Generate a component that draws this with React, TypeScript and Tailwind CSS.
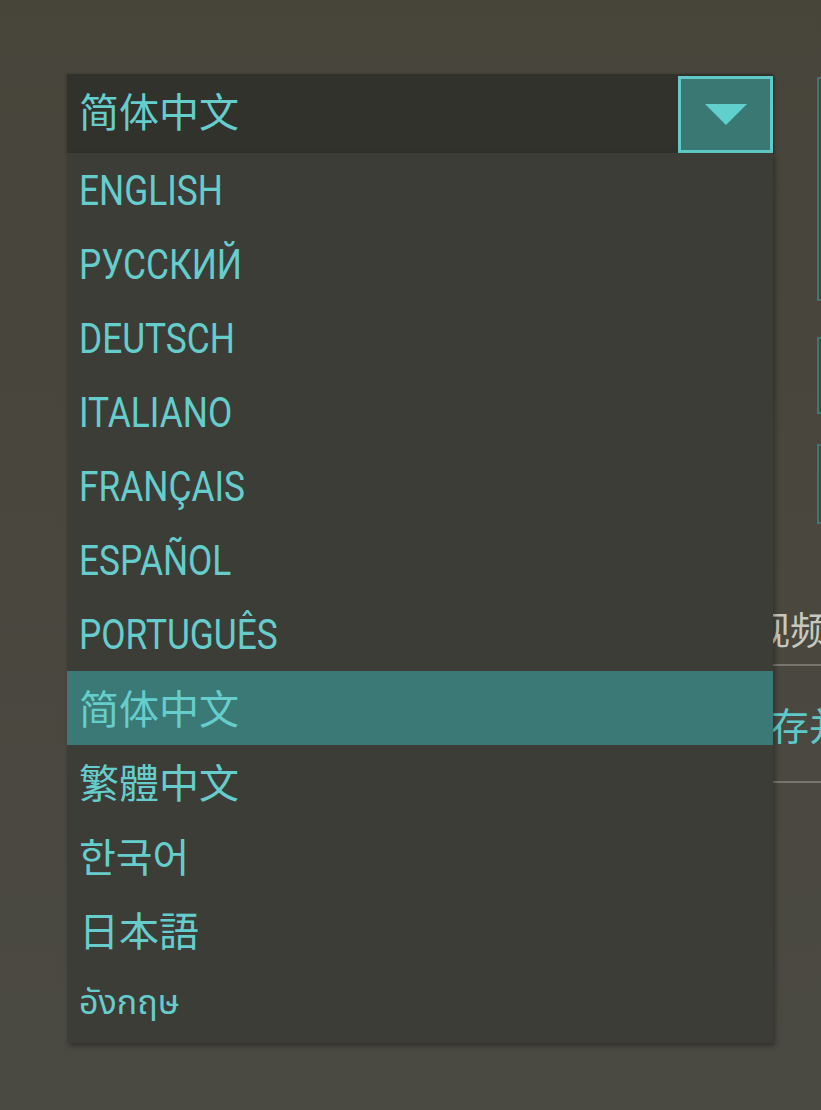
import React from "react";

const LATIN = "'Roboto', 'Liberation Sans', sans-serif";
const CJK = (lang: string) =>
  `'Noto Sans CJK ${lang}', 'Noto Sans CJK SC', 'Noto Sans', sans-serif`;

type Item = { label: string; kind: "latin" | "SC" | "TC" | "KR" | "JP" | "TH"; selected?: boolean };

const items: Item[] = [
  { label: "ENGLISH", kind: "latin" },
  { label: "РУССКИЙ", kind: "latin" },
  { label: "DEUTSCH", kind: "latin" },
  { label: "ITALIANO", kind: "latin" },
  { label: "FRANÇAIS", kind: "latin" },
  { label: "ESPAÑOL", kind: "latin" },
  { label: "PORTUGUÊS", kind: "latin" },
  { label: "简体中文", kind: "SC", selected: true },
  { label: "繁體中文", kind: "TC" },
  { label: "한국어", kind: "KR" },
  { label: "日本語", kind: "JP" },
  { label: "อังกฤษ", kind: "TH" },
];

function Label({ item }: { item: Item }) {
  if (item.kind === "latin") {
    return (
      <span
        className="inline-block mt-[2px] origin-left scale-x-[0.84] text-[42px] leading-none whitespace-nowrap"
        style={{ fontFamily: LATIN }}
      >
        {item.label}
      </span>
    );
  }
  if (item.kind === "TH") {
    return (
      <span
        className="inline-block text-[34px] leading-none whitespace-nowrap"
        style={{ fontFamily: "'Noto Sans Thai', 'Noto Sans', 'DejaVu Sans', sans-serif" }}
      >
        {item.label}
      </span>
    );
  }
  return (
    <span
      className="inline-block -mt-[2px] text-[40px] leading-none whitespace-nowrap"
      style={{ fontFamily: CJK(item.kind) }}
    >
      {item.label}
    </span>
  );
}

export default function App() {
  return (
    <div className="relative w-[821px] h-[1110px] overflow-hidden bg-gradient-to-b from-[#47443a] to-[#4b4a42]">
      {/* top row: select + right column of fields */}
      <div className="flex items-start pt-[74px] pl-[67px]">
        <div className="relative w-[706px] shrink-0 z-10">
          {/* closed select header */}
          <div className="flex h-[79px] items-center justify-between bg-[#32322d] pl-[12px] text-[#66cdcd] shadow-[0_1px_3px_rgba(0,0,0,0.35)]">
            <span
              className="-mt-[7px] text-[40px] leading-none whitespace-nowrap"
              style={{ fontFamily: CJK("SC") }}
            >
              简体中文
            </span>
            <div className="flex h-[77px] w-[95px] items-center justify-center self-end border-[3px] border-[#5fcac7] bg-[#3a7874] shadow-[1px_1px_2px_rgba(0,0,0,0.5)]">
              <svg width="42" height="21" viewBox="0 0 42 21">
                <polygon points="0,0 42,0 21,21" fill="#61d0cd" />
              </svg>
            </div>
          </div>
          {/* open list */}
          <div className="absolute left-0 top-full w-[706px] bg-[#3d3d37] text-[#66cdcd] shadow-[2px_3px_5px_rgba(0,0,0,0.35)] pb-[2px]">
            {items.map((it) => (
              <div
                key={it.label}
                className={
                  "flex h-[74px] items-center pl-[12px] " +
                  (it.selected ? "bg-[#3a7975]" : "")
                }
              >
                <Label item={it} />
              </div>
            ))}
          </div>
        </div>
        <div className="ml-[44px] flex flex-col pt-[3px]">
          <div className="h-[224px] w-[120px] border-2 border-[#3e7672] bg-[#45443b]" />
          <div className="mt-[36px] h-[77px] w-[120px] border-2 border-[#3e7672] bg-[#45443b]" />
          <div className="mt-[30px] h-[80px] w-[120px] border-2 border-[#3e7672] bg-[#45443b]" />
        </div>
      </div>

      {/* video section behind the menu */}
      <div className="mt-[85px] pl-[733px]">
        <div
          className="pl-[19px] text-[38px] leading-none whitespace-nowrap text-[#c8c8be]"
          style={{ fontFamily: CJK("SC") }}
        >
          视频设置
        </div>
        <div className="mt-[17px] h-[2px] w-[200px] bg-[#77766d]" />
        <div
          className="flex h-[115px] items-center text-[38px] leading-none whitespace-nowrap text-[#5ec9c9]"
          style={{ fontFamily: CJK("SC") }}
        >
          保存并退出
        </div>
        <div className="h-[2px] w-[200px] bg-[#77766d]" />
      </div>
    </div>
  );
}
